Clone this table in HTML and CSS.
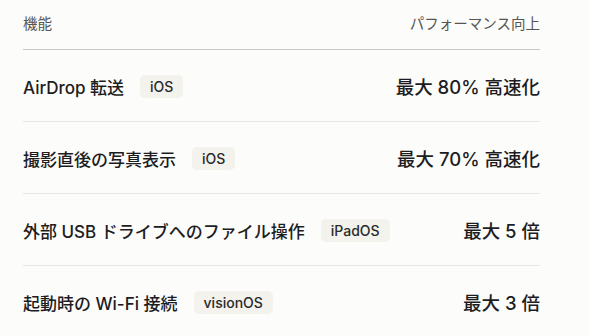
FILE: index.html
```html
<!DOCTYPE html>
<html lang="ja">
<head>
<meta charset="utf-8">
<link rel="stylesheet" href="styles.css">
</head>
<body>
<div class="table">
  <div class="head">
    <span>機能</span>
    <span>パフォーマンス向上</span>
  </div>
  <div class="row">
    <div class="feat"><span class="name">AirDrop 転送</span><span class="badge">iOS</span></div>
    <div class="val">最大 80% 高速化</div>
  </div>
  <div class="row">
    <div class="feat"><span class="name">撮影直後の写真表示</span><span class="badge">iOS</span></div>
    <div class="val">最大 70% 高速化</div>
  </div>
  <div class="row">
    <div class="feat"><span class="name">外部 USB ドライブへのファイル操作</span><span class="badge">iPadOS</span></div>
    <div class="val">最大 5 倍</div>
  </div>
  <div class="row">
    <div class="feat"><span class="name">起動時の Wi-Fi 接続</span><span class="badge">visionOS</span></div>
    <div class="val">最大 3 倍</div>
  </div>
</div>
</body>
</html>
```
FILE: styles.css
```css
html, body {
  margin: 0;
  padding: 0;
  background: #fcfcfa;
}
body {
  font-family: "Inter", "Noto Sans CJK JP", sans-serif;
  color: #1d1d1f;
  padding: 0 50px 0 23px;
}
.table {
  display: flex;
  flex-direction: column;
}
.head {
  display: flex;
  justify-content: space-between;
  align-items: center;
  box-sizing: border-box;
  height: 50px;
  padding-bottom: 4px;
  font-size: 14.5px;
  color: #555;
  border-bottom: 1px solid #c9c9c9;
}
.row {
  display: flex;
  justify-content: space-between;
  align-items: center;
  height: 72px;
  box-sizing: border-box;
  border-bottom: 1px solid #e6e6e6;
  padding-top: 1px;
}
.feat {
  display: flex;
  align-items: center;
  gap: 16px;
}
.name {
  font-size: 17px;
  font-weight: 500;
}
.badge {
  font-size: 14px;
  font-weight: 500;
  color: #2a2a2a;
  background: #f3f2ec;
  border-radius: 5px;
  height: 23px;
  line-height: 23px;
  padding: 0 10px;
}
.val {
  font-size: 18.5px;
  font-weight: 500;
}
```
